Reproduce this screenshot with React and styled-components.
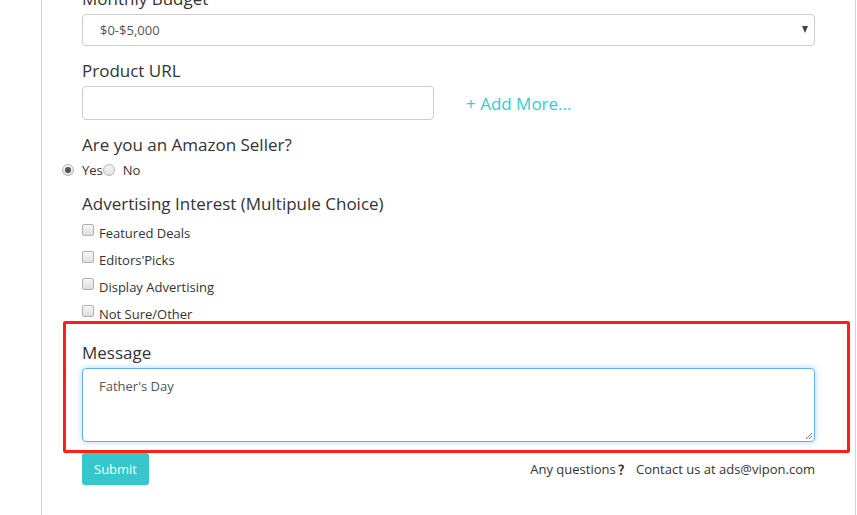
import React from "react";
import styled, { createGlobalStyle } from "styled-components";

const GlobalStyle = createGlobalStyle`
  html, body {
    margin: 0;
    padding: 0;
    background: #fff;
    font-family: "Open Sans", "Liberation Sans", sans-serif;
    color: #333;
    overflow: hidden;
  }
`;

const Page = styled.div`
  height: 515px;
  overflow: hidden;
  padding-left: 41px;
`;

const Panel = styled.div`
  box-sizing: border-box;
  width: 815px;
  height: 540px;
  border-left: 1px solid #d4d4d4;
  border-right: 1px solid #d4d4d4;
  padding: 0 40px;
  margin-top: -11px;
`;

const FormGroup = styled.div`
  margin-bottom: ${(p) => p.$mb ?? 15}px;
`;

const Label = styled.label`
  display: block;
  font-size: 17px;
  line-height: 20px;
  margin-bottom: 5px;
  color: #333;
`;

const Select = styled.div`
  height: 32px;
  box-sizing: border-box;
  border: 1px solid #ccc;
  border-radius: 4px;
  display: flex;
  align-items: center;
  justify-content: space-between;
  padding: 0 6px 0 17px;
  font-size: 13px;
  color: #555;
`;

const Caret = styled.span`
  width: 0;
  height: 0;
  border-left: 3.5px solid transparent;
  border-right: 3.5px solid transparent;
  border-top: 7px solid #444;
  margin-top: -2px;
`;

const UrlRow = styled.div`
  display: flex;
  align-items: center;
  gap: 32px;
`;

const Input = styled.div`
  width: 352px;
  height: 34px;
  box-sizing: border-box;
  border: 1px solid #ccc;
  border-radius: 4px;
`;

const AddMore = styled.a`
  font-size: 17px;
  color: #33ccd3;
  text-decoration: none;
  cursor: pointer;
`;

const RadioRow = styled.div`
  display: flex;
  align-items: center;
  font-size: 13px;
  margin-left: -20px;
  height: 20px;
`;

const RadioItem = styled.span`
  display: inline-flex;
  align-items: center;
`;

const Radio = styled.span`
  width: 12px;
  height: 12px;
  box-sizing: border-box;
  border-radius: 50%;
  border: 1px solid #b5b5b5;
  background: linear-gradient(#f4f4f4, #e2e2e2);
  margin-right: 8px;
  display: inline-flex;
  align-items: center;
  justify-content: center;
  &::after {
    content: "";
    width: 6px;
    height: 6px;
    border-radius: 50%;
    background: ${(p) => (p.$checked ? "#555" : "transparent")};
  }
`;

const CheckRow = styled.div`
  display: flex;
  align-items: center;
  font-size: 13px;
  height: 27px;
`;

const Checkbox = styled.span`
  width: 12px;
  height: 12px;
  box-sizing: border-box;
  border: 1px solid #b0b0b0;
  border-radius: 2px;
  background: linear-gradient(#f6f6f6, #dedede);
  margin-right: 5px;
  margin-top: -5px;
`;

const Highlight = styled.div`
  border: 3px solid #ff2015;
  margin: -6px -35px 0 -19px;
  padding: 19px 32px 8px 16px;
  border-radius: 2px;
`;

const TextArea = styled.div`
  position: relative;
  height: 74px;
  margin-top: 1px;
  box-sizing: border-box;
  border: 1px solid #66afe9;
  border-radius: 4px;
  box-shadow: 0 0 6px rgba(102, 175, 233, 0.5);
  padding: 8px 16px;
  font-size: 13px;
  color: #555;
`;

const Grip = styled.svg`
  position: absolute;
  right: 1px;
  bottom: 1px;
`;

const Footer = styled.div`
  display: flex;
  justify-content: space-between;
  align-items: center;
`;

const Button = styled.button`
  background: #37c6cc;
  color: #fff;
  border: none;
  border-radius: 3px;
  height: 32px;
  padding: 0 12px;
  font-family: inherit;
  font-size: 13px;
`;

const Contact = styled.span`
  font-size: 13px;
  color: #333;
  margin-top: -2px;
`;

const QMark = styled.span`
  font-family: "Noto Sans CJK SC", sans-serif;
  font-weight: 600;
  margin: 0 2px;
`;

const interests = ["Featured Deals", "Editors'Picks", "Display Advertising", "Not Sure/Other"];

export default function App() {
  return (
    <Page>
      <GlobalStyle />
      <Panel>
        <FormGroup>
          <Label>Monthly Budget</Label>
          <Select>
            <span>$0-$5,000</span>
            <Caret />
          </Select>
        </FormGroup>
        <FormGroup>
          <Label>Product URL</Label>
          <UrlRow>
            <Input />
            <AddMore>+ Add More...</AddMore>
          </UrlRow>
        </FormGroup>
        <FormGroup $mb={14}>
          <Label>Are you an Amazon Seller?</Label>
          <RadioRow>
            <RadioItem>
              <Radio $checked />
              Yes
            </RadioItem>
            <RadioItem>
              <Radio />
              No
            </RadioItem>
          </RadioRow>
        </FormGroup>
        <FormGroup $mb={0}>
          <Label>Advertising Interest (Multipule Choice)</Label>
          {interests.map((name) => (
            <CheckRow key={name}>
              <Checkbox />
              {name}
            </CheckRow>
          ))}
        </FormGroup>
        <Highlight>
          <Label>Message</Label>
          <TextArea>
            Father's Day
            <Grip width="8" height="8" viewBox="0 0 8 8">
              <path d="M7 1 L1 7 M7 4 L4 7" stroke="#777" strokeWidth="1" />
            </Grip>
          </TextArea>
        </Highlight>
        <Footer>
          <Button>Submit</Button>
          <Contact>
            Any questions<QMark>？</QMark> Contact us at ads@vipon.com
          </Contact>
        </Footer>
      </Panel>
    </Page>
  );
}
